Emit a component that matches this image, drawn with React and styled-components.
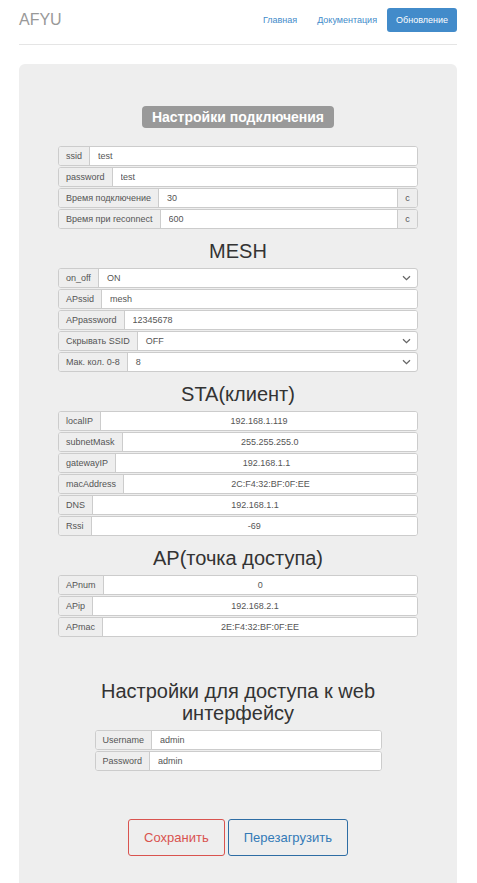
import React from 'react'
import styled, { createGlobalStyle } from 'styled-components'

const GlobalStyle = createGlobalStyle`
  body {
    margin: 0;
    background: #fff;
    font-family: "Liberation Sans", Arial, sans-serif;
    color: #333;
  }
  * { box-sizing: border-box; }
`

const Page = styled.div`
  padding: 0 20px 0 19px;
`

const Header = styled.div`
  display: flex;
  align-items: center;
  justify-content: space-between;
  height: 45px;
  padding-bottom: 4px;
  border-bottom: 1px solid #e5e5e5;
`

const Brand = styled.div`
  font-size: 16px;
  color: #999;
`

const Nav = styled.div`
  display: flex;
  align-items: center;
`

const NavLink = styled.a`
  font-size: 9px;
  color: #428bca;
  padding: 0 10px;
  line-height: 24px;
  text-decoration: none;
`

const NavButton = styled.a`
  font-size: 9px;
  color: #fff;
  background: #428bca;
  border-radius: 3px;
  padding: 0 9px;
  line-height: 24px;
  text-decoration: none;
`

const Panel = styled.div`
  margin-top: 19px;
  background: #eee;
  border-radius: 6px;
  padding: 42px 39px 40px;
  display: flex;
  flex-direction: column;
  align-items: center;
`

const Badge = styled.div`
  background: #999;
  color: #fff;
  font-weight: bold;
  font-size: 14px;
  line-height: 22px;
  padding: 0 10px;
  border-radius: 4px;
  margin-bottom: 18px;
`

const SectionTitle = styled.div`
  font-size: 20px;
  line-height: 22px;
  text-align: center;
  margin: ${(p) => p.gap || '10px'} 0 6px;
  width: 100%;
`

const Group = styled.div`
  width: ${(p) => p.width || '100%'};
  display: flex;
  flex-direction: column;
`

const Row = styled.div`
  display: flex;
  height: 20px;
  margin-bottom: 1px;
  border: 1px solid #ccc;
  border-radius: 3px;
  background: #fff;
  font-size: 9px;
  color: #555;
  overflow: hidden;
`

const Addon = styled.div`
  display: flex;
  align-items: center;
  padding: 0 7px;
  background: #eee;
  border-right: 1px solid #ccc;
  white-space: nowrap;
`

const Suffix = styled.div`
  display: flex;
  align-items: center;
  justify-content: center;
  width: 20px;
  background: #eee;
  border-left: 1px solid #ccc;
`

const Field = styled.input`
  flex: 1;
  min-width: 0;
  border: none;
  outline: none;
  background: #fff;
  padding: 0 8px;
  font: inherit;
  color: #555;
  text-align: ${(p) => (p.center ? 'center' : 'left')};
`

const SelectBox = styled.div`
  flex: 1;
  display: flex;
  align-items: center;
  justify-content: space-between;
  padding: 0 6px 0 8px;
`

const Actions = styled.div`
  display: flex;
  gap: 3px;
  margin-top: 47px;
`

const ActionButton = styled.button`
  height: 37px;
  padding: 0 15px;
  background: transparent;
  border: 1px solid ${(p) => (p.danger ? '#d9534f' : '#2e6da4')};
  color: ${(p) => (p.danger ? '#d9534f' : '#337ab7')};
  border-radius: 3px;
  font-family: "Liberation Sans", Arial, sans-serif;
  font-size: 13px;
`

function Chevron() {
  return (
    <svg width="9" height="6" viewBox="0 0 9 6">
      <path d="M1 1.2 L4.5 4.6 L8 1.2" fill="none" stroke="#666" strokeWidth="1.3" />
    </svg>
  )
}

function TextRow({ label, value, suffix, center }) {
  return (
    <Row>
      <Addon>{label}</Addon>
      <Field defaultValue={value} center={center} />
      {suffix && <Suffix>{suffix}</Suffix>}
    </Row>
  )
}

function SelectRow({ label, value }) {
  return (
    <Row>
      <Addon>{label}</Addon>
      <SelectBox>
        <span>{value}</span>
        <Chevron />
      </SelectBox>
    </Row>
  )
}

const sta = [
  ['localIP', '192.168.1.119'],
  ['subnetMask', '255.255.255.0'],
  ['gatewayIP', '192.168.1.1'],
  ['macAddress', '2C:F4:32:BF:0F:EE'],
  ['DNS', '192.168.1.1'],
  ['Rssi', '-69'],
]

const ap = [
  ['APnum', '0'],
  ['APip', '192.168.2.1'],
  ['APmac', '2E:F4:32:BF:0F:EE'],
]

export default function App() {
  return (
    <Page>
      <GlobalStyle />
      <Header>
        <Brand>AFYU</Brand>
        <Nav>
          <NavLink href="#">Главная</NavLink>
          <NavLink href="#">Документация</NavLink>
          <NavButton href="#">Обновление</NavButton>
        </Nav>
      </Header>

      <Panel>
        <Badge>Настройки подключения</Badge>
        <Group>
          <TextRow label="ssid" value="test" />
          <TextRow label="password" value="test" />
          <TextRow label="Время подключение" value="30" suffix="c" />
          <TextRow label="Время при reconnect" value="600" suffix="c" />
        </Group>

        <SectionTitle>MESH</SectionTitle>
        <Group>
          <SelectRow label="on_off" value="ON" />
          <TextRow label="APssid" value="mesh" />
          <TextRow label="APpassword" value="12345678" />
          <SelectRow label="Скрывать SSID" value="OFF" />
          <SelectRow label="Мак. кол. 0-8" value="8" />
        </Group>

        <SectionTitle>STA(клиент)</SectionTitle>
        <Group>
          {sta.map(([k, v]) => (
            <TextRow key={k} label={k} value={v} center />
          ))}
        </Group>

        <SectionTitle>AP(точка доступа)</SectionTitle>
        <Group>
          {ap.map(([k, v]) => (
            <TextRow key={k} label={k} value={v} center />
          ))}
        </Group>

        <SectionTitle gap="42px">Настройки для доступа к web интерфейсу</SectionTitle>
        <Group width="287px">
          <TextRow label="Username" value="admin" />
          <TextRow label="Password" value="admin" />
        </Group>

        <Actions>
          <ActionButton danger>Сохранить</ActionButton>
          <ActionButton>Перезагрузить</ActionButton>
        </Actions>
      </Panel>
    </Page>
  )
}
